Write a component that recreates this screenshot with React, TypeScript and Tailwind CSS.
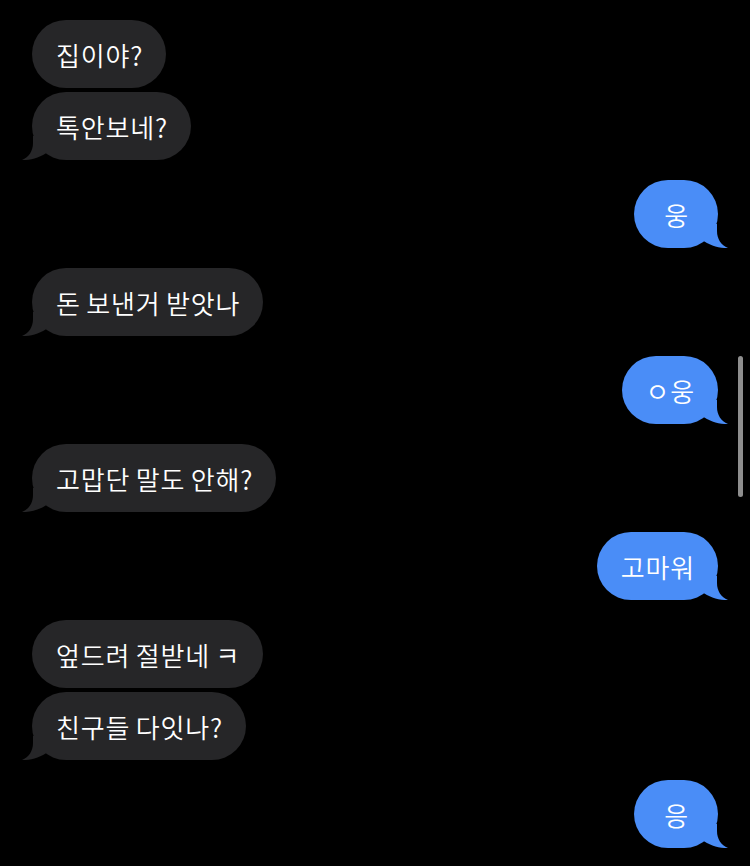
import React from "react";

type Msg = { text: string; me: boolean; tail: boolean; gap: "sm" | "lg" | "none" };

const msgs: Msg[] = [
  { text: "집이야?", me: false, tail: false, gap: "none" },
  { text: "톡안보네?", me: false, tail: true, gap: "sm" },
  { text: "웅", me: true, tail: true, gap: "lg" },
  { text: "돈 보낸거 받앗나", me: false, tail: true, gap: "lg" },
  { text: "ㅇ웅", me: true, tail: true, gap: "lg" },
  { text: "고맙단 말도 안해?", me: false, tail: true, gap: "lg" },
  { text: "고마워", me: true, tail: true, gap: "lg" },
  { text: "엎드려 절받네 ㅋ", me: false, tail: false, gap: "lg" },
  { text: "친구들 다잇나?", me: false, tail: true, gap: "sm" },
  { text: "응", me: true, tail: true, gap: "lg" },
];

function Tail({ me }: { me: boolean }) {
  const color = me ? "#4a8df7" : "#262628";
  if (me) {
    return (
      <svg
        className="absolute bottom-0 right-[-11px]"
        width="32"
        height="24"
        viewBox="0 0 32 24"
      >
        <path
          d="M20 0 L20 7 C20 15 24 21 31 24 C22 24.5 12 21 5 16 L5 0 Z"
          fill={color}
        />
      </svg>
    );
  }
  return (
    <svg
      className="absolute bottom-0 left-[-11px]"
      width="32"
      height="24"
      viewBox="0 0 32 24"
    >
      <path
        d="M12 0 L12 7 C12 15 8 21 1 24 C10 24.5 20 21 27 16 L27 0 Z"
        fill={color}
      />
    </svg>
  );
}

export default function App() {
  return (
    <div
      className="relative w-[750px] h-[866px] bg-black overflow-hidden"
      style={{ fontFamily: '"Noto Sans CJK KR", "Noto Sans", sans-serif' }}
    >
      <div className="flex flex-col px-8 pt-5">
        {msgs.map((m, i) => (
          <div
            key={i}
            className={
              (m.me ? "justify-end " : "justify-start ") +
              "flex " +
              (m.gap === "lg" ? "mt-5" : m.gap === "sm" ? "mt-1" : "")
            }
          >
            <div
              className={
                (m.me ? "bg-[#4a8df7] justify-center" : "bg-[#262628]") +
                " relative flex h-[68px] min-w-[84px] items-center rounded-[34px] pl-6 pr-[23px] text-[26px] font-[350] tracking-[0.8px] [word-spacing:-1px] text-white"
              }
            >
              <span className="relative z-10 whitespace-pre">{m.text}</span>
              {m.tail && <Tail me={m.me} />}
            </div>
          </div>
        ))}
      </div>
      <div className="absolute right-[7px] top-[356px] h-[141px] w-[5px] rounded-full bg-[#8e8e8e]" />
    </div>
  );
}
